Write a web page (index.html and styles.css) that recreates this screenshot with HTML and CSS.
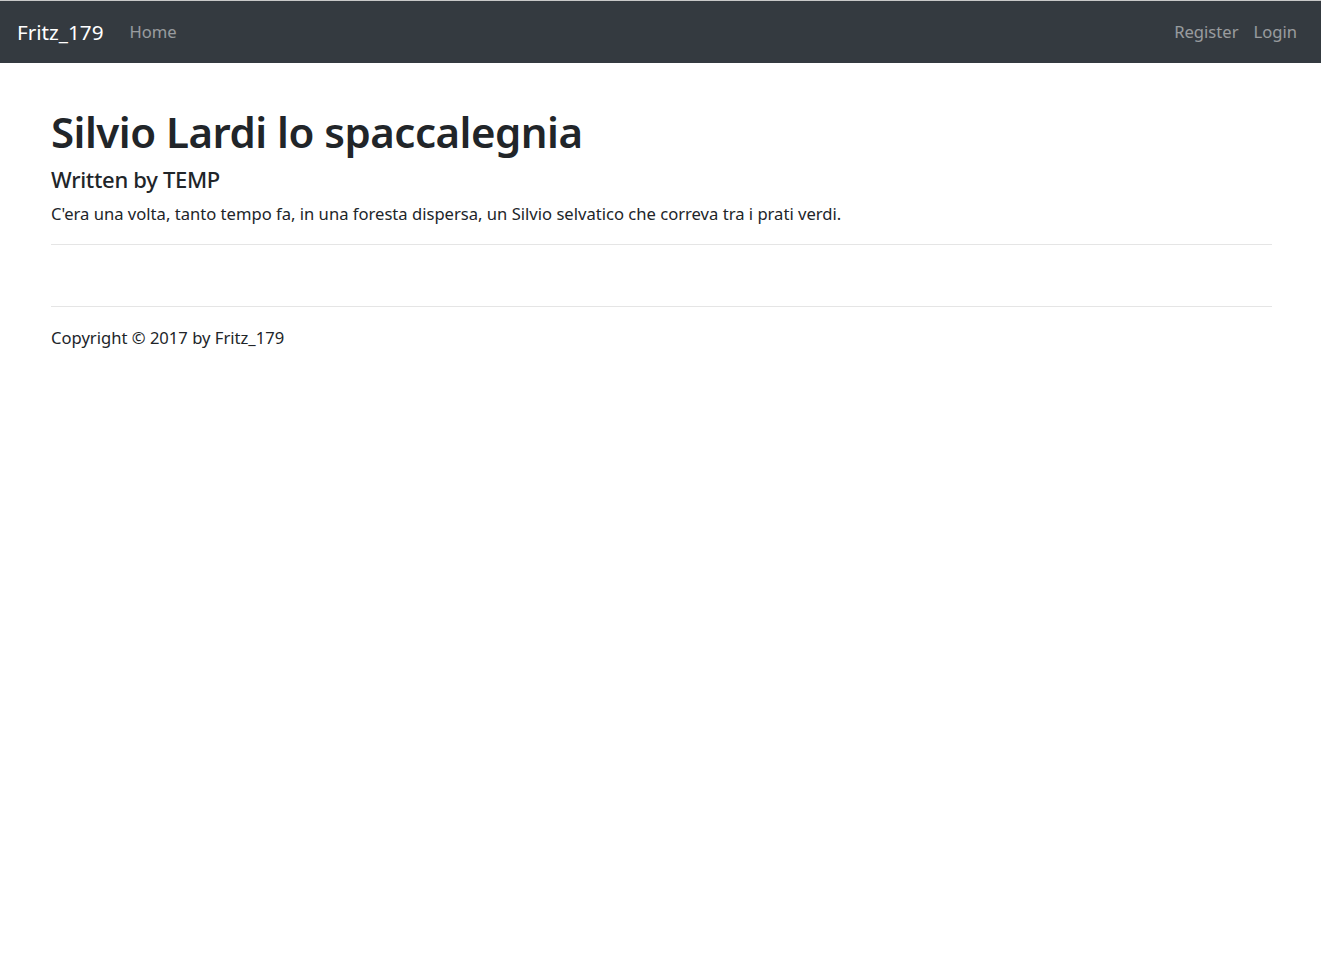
FILE: index.html
```html
<!DOCTYPE html>
<html lang="it">
<head>
<meta charset="utf-8">
<title>Fritz_179</title>
<link rel="stylesheet" href="styles.css">
</head>
<body>
<nav class="navbar">
  <div class="nav-left">
    <a class="brand" href="#">Fritz_179</a>
    <a class="nav-link" href="#">Home</a>
  </div>
  <div class="nav-right">
    <a class="nav-link" href="#">Register</a>
    <a class="nav-link" href="#">Login</a>
  </div>
</nav>
<main class="container">
  <h1 class="title">Silvio Lardi lo spaccalegnia</h1>
  <h4 class="author">Written by TEMP</h4>
  <p class="body-text">C'era una volta, tanto tempo fa, in una foresta dispersa, un Silvio selvatico che correva tra i prati verdi.</p>
  <hr class="rule">
  <hr class="rule rule-footer">
  <footer class="footer">Copyright © 2017 by Fritz_179</footer>
</main>
</body>
</html>
```
FILE: styles.css
```css
* { box-sizing: border-box; }
html, body { margin: 0; padding: 0; }
body {
  font-family: "Noto Sans", "Open Sans", sans-serif;
  font-size: 16.6px;
  line-height: 24px;
  color: #212529;
  background: #fff;
  border-top: 1px solid #c8c8c8;
}
a { text-decoration: none; }
.navbar {
  display: flex;
  justify-content: space-between;
  align-items: center;
  height: 62px;
  padding: 0 16px;
  background: #343a40;
}
.nav-left, .nav-right { display: flex; align-items: center; }
.brand {
  color: #fff;
  font-size: 20.7px;
  margin-right: 18px;
  padding-left: 1px;
}
.nav-link {
  color: rgba(255,255,255,.5);
  padding: 8px;
}
.nav-right .nav-link:first-child { margin-right: -1px; }
.container {
  padding: 0 49px 0 51px;
}
.title {
  margin: 44px 0 0;
  font-size: 42px;
  font-weight: 600;
  line-height: 50px;
  letter-spacing: -0.5px;
}
.author {
  margin: 9px 0 0;
  font-size: 22px;
  font-weight: 500;
  line-height: 27px;
  letter-spacing: -0.3px;
}
.body-text { margin: 9px 0 0; }
.rule {
  border: 0;
  border-top: 1px solid #e5e5e5;
  margin: 18px 0 0;
}
.rule-footer { margin-top: 61px; }
.footer { margin-top: 19px; }
```
